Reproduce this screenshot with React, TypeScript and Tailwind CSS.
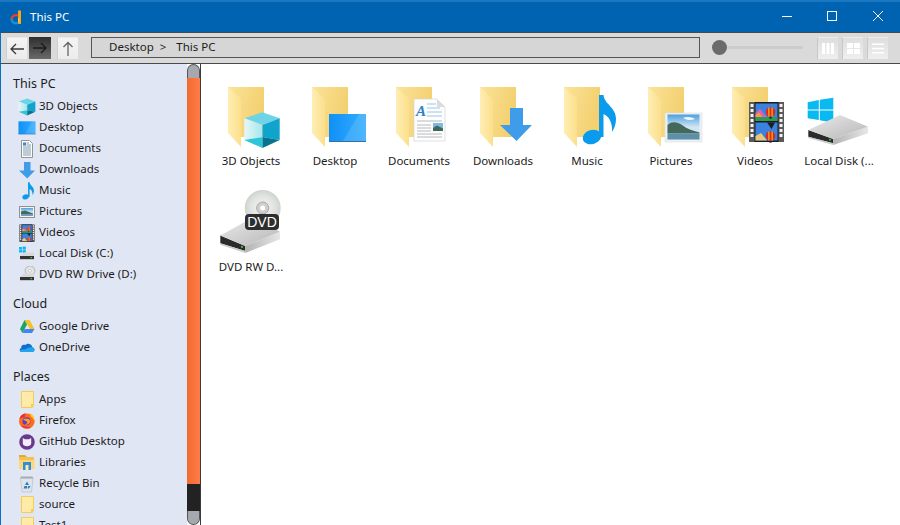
import React from "react";

const Folder = () => (
  <g>
    <path d="M9 3H45V53H22Z" fill="url(#fBack)" />
    <path d="M9 3L22 15V63L9 49Z" fill="url(#fFront)" />
  </g>
);

const Cube = () => (
  <g>
    <path d="M43.3 28.3L60.7 34.3L43.5 41L25.3 34.3Z" fill="#6dd3e6" />
    <path d="M25.3 34.3L43.5 41V53L25.3 56Z" fill="url(#cubeL)" />
    <path d="M25.3 56L43.5 53V64Z" fill="#2cc6d8" />
    <path d="M43.5 41L60.7 34.3V56L43.5 53Z" fill="#10a3cc" />
    <path d="M43.5 53L60.7 56L43.5 64Z" fill="#07738f" />
  </g>
);

const Monitor = () => (
  <g>
    <rect x="26" y="30" width="37" height="28" fill="url(#screen)" />
    <path d="M40 57L56 30H63V57Z" fill="#ffffff" fillOpacity="0.12" />
    <rect x="26" y="57" width="37" height="1" fill="#3a6f9c" />
  </g>
);

const Doc = () => (
  <g>
    <path d="M27 15H50L58 23V57H27Z" fill="#fdfdfd" stroke="#d4d4d4" strokeWidth="0.7" />
    <path d="M50 15V23H58Z" fill="#dcdcdc" />
    <text x="29" y="32" fontSize="15" fontStyle="italic" fontWeight="700" fill="#2f80c8" fontFamily="Liberation Serif, serif">A</text>
    <path d="M40 20H49M40 24H53M40 28H55M40 32H55" stroke="#9cc6e8" strokeWidth="1" />
    <path d="M30 37H55M30 47H44M30 50H55M30 53H55" stroke="#b5b9bd" strokeWidth="1" />
    <path d="M30 41H44M30 44H44" stroke="#b5b9bd" strokeWidth="1" />
    <rect x="46" y="39" width="10" height="8" fill="#7fb9df" />
    <path d="M46 44L50 41.5L56 44.5V47H46Z" fill="#3f6a5a" />
  </g>
);

const ArrowDown = () => <path d="M39 24H52V41H61L45.5 57L29 41H39Z" fill="#3f9ce9" />;

const Note = () => (
  <g fill="#0a9bec">
    <ellipse cx="37" cy="53" rx="9.5" ry="7" transform="rotate(-18 37 53)" />
    <path d="M44 11H48.5C49 20 61 23 61 35C61 40 59.5 44 57 48C57.5 42 56 33 48.5 30V53H44Z" />
  </g>
);

const Picture = () => (
  <g>
    <rect x="26" y="29" width="37" height="29" fill="#eef0f2" stroke="#dcdfe2" strokeWidth="0.6" />
    <rect x="28.5" y="30.5" width="32" height="25" fill="url(#sky)" />
    <path d="M44 34C48 32 53 33 56 35C52 37 47 36 44 34Z" fill="#eef6fa" />
    <path d="M28.5 41C33 37 38 38 43 41C48 45 55 47 60.5 48.5V49.5H28.5Z" fill="#44685a" />
    <rect x="28.5" y="49.5" width="32" height="6" fill="#5d8fa8" />
  </g>
);

const Balloon = ({ x, y }: { x: number; y: number }) => (
  <g>
    <circle cx={x} cy={y} r="4.8" fill="#d82a22" />
    <path d={`M${x - 1.6} ${y - 4.6}V${y + 4.6}M${x + 1.6} ${y - 4.6}V${y + 4.6}`} stroke="#f5c518" strokeWidth="1.1" />
    <rect x={x - 1.2} y={y + 5} width="2.4" height="1.6" fill="#222" />
  </g>
);

const Film = () => (
  <g>
    <rect x="26" y="18" width="35" height="40" fill="#5a5a5a" />
    <g fill="#f2f2f2">
      {[20, 25, 30, 35, 40, 45, 50].map((y) => (
        <React.Fragment key={y}>
          <rect x="27.5" y={y} width="3" height="3" />
          <rect x="56.5" y={y} width="3" height="3" />
        </React.Fragment>
      ))}
    </g>
    <rect x="31.5" y="18" width="24" height="40" fill="#1c1c1c" />
    <rect x="32.5" y="19.5" width="22" height="17.5" fill="#3a82e0" />
    <rect x="32.5" y="38.5" width="22" height="18" fill="#3a82e0" />
    <path d="M32.5 33V29L37 25L41 30L44 33Z" fill="#e060b0" />
    <path d="M32.5 33V31L36 28.5L39 33Z" fill="#f0a040" />
    <rect x="32.5" y="33" width="22" height="4" fill="#2f9a52" />
    <path d="M32.5 56.5V52L38 49L44 56.5Z" fill="#e8c878" />
    <Balloon x={47.5} y={28} />
    <path d="M44 38.5H52L48.5 45Z" fill="#1d1d1d" />
    <Balloon x={47.5} y={52} />
  </g>
);

const Drive = ({ transform }: { transform?: string }) => (
  <g transform={transform}>
    <path d="M1.3 46L26.3 55V59.3L1.3 52.7Z" fill="#2b2b2b" />
    <path d="M1.3 52.7L26.3 59.3V61L1.3 54Z" fill="#c9c9c9" />
    <path d="M1.3 46L33 31L61 42.7L26.3 55Z" fill="url(#driveTop)" />
    <path d="M26.3 55L61 42.7V49.3L26.3 61Z" fill="url(#driveSide)" />
    <circle cx="23" cy="55.8" r="1" fill="#34d04e" />
  </g>
);

const WinLogo = () => (
  <g fill="#08b9f2">
    <path d="M0.7 18.3L11.8 16V25.5H0.7Z" />
    <path d="M12.8 15.8L26.3 13.7V25.5H12.8Z" />
    <path d="M0.7 26.5H11.8V36L0.7 34.3Z" />
    <path d="M12.8 26.5H26.3V38.7L12.8 36.3Z" />
  </g>
);

const DvdTop = () => (
  <g>
    <circle cx="43.7" cy="18" r="18" fill="url(#disc)" />
    <circle cx="43.7" cy="18" r="6" fill="#cfcfcf" stroke="#a9a9a9" strokeWidth="1" />
    <circle cx="43.7" cy="18" r="2.5" fill="#fff" />
  </g>
);

const Icon = ({ children, viewBox = "0 0 64 64", size = 64 }: { children: React.ReactNode; viewBox?: string; size?: number }) => (
  <svg width={size} height={size} viewBox={viewBox} className="shrink-0">
    {children}
  </svg>
);

const Mini = ({ children }: { children: React.ReactNode }) => (
  <svg width="18" height="18" viewBox="0 0 18 18" className="shrink-0">
    {children}
  </svg>
);

const MiniNote = () => (
  <Mini>
    <path d="M3.5 0.5H15.5V13.5L13.5 16.5H3.5Z" fill="#ffeaa8" stroke="#f2cd5a" strokeWidth="1" />
    <path d="M13 13H15.5V16.5H13Z" fill="#f2cd5a" />
  </Mini>
);

const MiniDrive = () => (
  <g>
    <path d="M2 11L6 7.5H16V11Z" fill="#d8d8d8" />
    <rect x="2" y="11" width="14" height="3" fill="#333" />
    <rect x="2" y="14" width="14" height="0.8" fill="#bdbdbd" />
    <rect x="12.5" y="12" width="1.4" height="1.2" fill="#3fdc5a" />
  </g>
);

const sideIcons: Record<string, React.ReactNode> = {
  "3D Objects": <Icon size={18} viewBox="24 27 38 38"><Cube /></Icon>,
  Desktop: <Icon size={18} viewBox="25 25 39 39"><Monitor /></Icon>,
  Documents: (
    <Mini>
      <path d="M3.5 0.5H11.5L14.5 3.5V17.5H3.5Z" fill="#fdfdfd" stroke="#8f9499" strokeWidth="1" />
      <rect x="5" y="2.5" width="3" height="3" fill="#3d87c9" />
      <path d="M8.5 3H11M8.5 5H13M5 7H13M5 9H13M5 11H13M5 13H13M5 15H13" stroke="#6f8ea8" strokeWidth="0.9" />
    </Mini>
  ),
  Downloads: <Icon size={18} viewBox="27 22 36 36"><ArrowDown /></Icon>,
  Music: <Icon size={18} viewBox="15 10 52 52"><Note /></Icon>,
  Pictures: (
    <Mini>
      <rect x="1.5" y="3.5" width="15" height="11" fill="#f2f3f4" stroke="#8e9296" strokeWidth="1" />
      <rect x="3" y="5" width="12" height="8" fill="url(#sky)" />
      <path d="M3 8.5L7 7.5L15 10.5V11H3Z" fill="#44685a" />
      <rect x="3" y="11" width="12" height="2" fill="#6f9db4" />
    </Mini>
  ),
  Videos: <Icon size={18} viewBox="23 17 41 41"><Film /></Icon>,
  "Local Disk (C:)": (
    <Mini>
      <g fill="#08b9f2">
        <rect x="1" y="2" width="3" height="2.6" />
        <rect x="4.6" y="1.6" width="3.2" height="3" />
        <rect x="1" y="5.1" width="3" height="2.4" />
        <rect x="4.6" y="5.1" width="3.2" height="2.6" />
      </g>
      <MiniDrive />
    </Mini>
  ),
  "DVD RW Drive (D:)": (
    <Mini>
      <circle cx="12" cy="4.8" r="5" fill="url(#disc)" stroke="#a8a8a8" strokeWidth="0.6" />
      <circle cx="12" cy="4.8" r="1.5" fill="#fff" stroke="#999" strokeWidth="0.5" />
      <MiniDrive />
    </Mini>
  ),
  "Google Drive": (
    <Mini>
      <path d="M6.5 2H11.5L16.5 11H12Z" fill="#f6c026" />
      <path d="M6.5 2L9 6.5L4.5 15L2 11Z" fill="#1ea362" />
      <path d="M6.5 11H16.5L14 15H4.5Z" fill="#4286f5" />
    </Mini>
  ),
  OneDrive: (
    <Mini>
      <path d="M4 13H14C17 13 17.5 9 14.5 8.5C14 5 9.5 3.5 7.5 6C4 5 2.5 8 3.5 9C1 9.5 1 13 4 13Z" fill="#0f6fd0" />
      <path d="M4 13H14C17 13 17.5 9.5 14.5 8.5C11 7.5 9 9 7 10.5L3 10.5C1.5 11 2 13 4 13Z" fill="#22a4ee" />
    </Mini>
  ),
  Apps: <MiniNote />,
  Firefox: (
    <Mini>
      <circle cx="8.8" cy="9.3" r="7.8" fill="#ff6a1f" />
      <path d="M1.5 7C2 3.5 5 1.5 8 1.5C6.5 3 6.5 4.5 7 5C5 5 3.5 6 1.5 7Z" fill="#e8302e" />
      <path d="M12 1C15 2.5 17 6 16.5 9.5C15.5 7 14.5 5.5 12.5 4.5Z" fill="#ffc61e" />
      <circle cx="8.5" cy="9.2" r="4" fill="#5b3fc8" />
      <path d="M5 7.5C7 6 11 6 12.5 9C12 12 9 13.5 6.5 12.5C9 12 10 10 8.5 9.5Z" fill="#ff9a1f" />
      <path d="M3 13C5 16 10 17 13 15C9 15 5 14.5 3 13Z" fill="#d6245c" />
    </Mini>
  ),
  "GitHub Desktop": (
    <Mini>
      <circle cx="9" cy="9" r="6.6" fill="#6a3a8e" stroke="#6a3a8e" strokeWidth="2.4" />
      <path d="M4.8 5L7 6.2H11L13.2 5V10.5C13.2 12.5 11 13.2 9 13.2C7 13.2 4.8 12.5 4.8 10.5Z" fill="#f4edf8" />
    </Mini>
  ),
  Libraries: (
    <Mini>
      <path d="M1 1H7L9 3H1Z" fill="#e2a93a" />
      <rect x="1" y="3" width="15" height="3" fill="#f2c14e" />
      <rect x="1" y="6" width="15.5" height="9" fill="#ffd875" />
      <rect x="5" y="8" width="8" height="8" fill="#2f8fd8" />
      <rect x="7.5" y="11" width="3" height="5" fill="#ffe9a5" />
    </Mini>
  ),
  "Recycle Bin": (
    <Mini>
      <path d="M3 1.5H14.5L15.5 3.5H2Z" fill="#a9acb0" />
      <path d="M2.5 3.5H15L13.5 17H4Z" fill="#dfe4ea" stroke="#b4b8bd" strokeWidth="0.6" />
      <path d="M9 6.5L11 10H7Z M6.5 11H9V13.5H5.5Z M12.5 11L11 13.5H9.8V11Z" fill="#2b7fc4" />
    </Mini>
  ),
  source: <MiniNote />,
  Test1: <MiniNote />,
};

const groups = [
  { title: "This PC", items: ["3D Objects", "Desktop", "Documents", "Downloads", "Music", "Pictures", "Videos", "Local Disk (C:)", "DVD RW Drive (D:)"] },
  { title: "Cloud", items: ["Google Drive", "OneDrive"] },
  { title: "Places", items: ["Apps", "Firefox", "GitHub Desktop", "Libraries", "Recycle Bin", "source", "Test1"] },
];

const tiles: { label: string; icon: React.ReactNode }[] = [
  { label: "3D Objects", icon: <><Folder /><Cube /></> },
  { label: "Desktop", icon: <><Folder /><Monitor /></> },
  { label: "Documents", icon: <><Folder /><Doc /></> },
  { label: "Downloads", icon: <><Folder /><ArrowDown /></> },
  { label: "Music", icon: <><Folder /><Note /></> },
  { label: "Pictures", icon: <><Folder /><Picture /></> },
  { label: "Videos", icon: <><Folder /><Film /></> },
  { label: "Local Disk (...", icon: <><WinLogo /><Drive /></> },
  {
    label: "DVD RW D...",
    icon: (
      <>
        <DvdTop />
        <Drive transform="translate(0 -8.2) scale(1 1.167)" />
        <rect x="26" y="24" width="34" height="16" rx="4" fill="#2e2e2e" />
        <text x="43" y="37" textAnchor="middle" fontSize="14" fill="#fff" fontFamily="Liberation Sans, sans-serif">DVD</text>
      </>
    ),
  },
];

const NavButton = ({ dark, children }: { dark?: boolean; children: React.ReactNode }) => (
  <div className={`h-[22px] flex items-center justify-center ${dark ? "w-[22px] bg-gradient-to-b from-[#2f2f2f] to-[#6a6a6a]" : "w-[21px] bg-gradient-to-b from-[#f4f4f4] to-[#ececec] border-t border-l border-t-[#e8e8e8] border-l-[#cfcfcf]"}`}>
    {children}
  </div>
);

const ViewButton = ({ children }: { children: React.ReactNode }) => (
  <div className="w-[21px] h-[22px] flex items-center justify-center bg-gradient-to-b from-[#dedede] to-[#efefef] border-t border-l border-t-[#ececec] border-l-[#c8c8c8]">{children}</div>
);

export default function App() {
  return (
    <div className="w-[900px] h-[525px] overflow-hidden flex flex-col bg-white text-[11.5px] text-[#1c1c1c] font-['Noto_Sans',sans-serif]">
      <svg width="0" height="0" className="absolute">
        <defs>
          <linearGradient id="fBack" x1="0" x2="1" y1="0" y2="0.3">
            <stop offset="0" stopColor="#fbe39a" />
            <stop offset="1" stopColor="#f3d06f" />
          </linearGradient>
          <linearGradient id="fFront" x1="0" x2="1" y1="0" y2="0">
            <stop offset="0" stopColor="#ffeeb4" />
            <stop offset="1" stopColor="#fbdf8c" />
          </linearGradient>
          <linearGradient id="cubeL" x1="0" x2="1" y1="0" y2="0">
            <stop offset="0" stopColor="#e6f7f8" />
            <stop offset="1" stopColor="#a5e6ec" />
          </linearGradient>
          <linearGradient id="screen" x1="0" x2="1" y1="0" y2="0">
            <stop offset="0" stopColor="#1090f8" />
            <stop offset="1" stopColor="#35aefe" />
          </linearGradient>
          <linearGradient id="sky" x1="0" x2="0" y1="0" y2="1">
            <stop offset="0" stopColor="#4f9fe0" />
            <stop offset="0.5" stopColor="#cfe6f3" />
          </linearGradient>
          <linearGradient id="driveTop" x1="0" x2="1" y1="0" y2="1">
            <stop offset="0" stopColor="#ebebeb" />
            <stop offset="1" stopColor="#b6b6b6" />
          </linearGradient>
          <linearGradient id="driveSide" x1="0" x2="1" y1="0" y2="0">
            <stop offset="0" stopColor="#b4b4b4" />
            <stop offset="1" stopColor="#e6e6e6" />
          </linearGradient>
          <radialGradient id="disc">
            <stop offset="0" stopColor="#f5f5f5" />
            <stop offset="0.7" stopColor="#dfe3df" />
            <stop offset="1" stopColor="#cfd2cf" />
          </radialGradient>
        </defs>
      </svg>

      <header className="h-[32px] shrink-0 bg-[#0063b1] border-t-2 border-t-[#1a78c2] flex items-center text-white">
        <svg width="14" height="16" viewBox="0 0 14 16" className="ml-[10px] shrink-0">
          <path d="M8 1.5H11V15H8Z" fill="#f0a81c" />
          <path d="M8 6.5C5 5.5 1.5 7 1.5 10.5" stroke="#e8402a" strokeWidth="2.4" fill="none" />
          <path d="M1.5 10C1.5 13 4.5 15 8 13.8" stroke="#1a8fe0" strokeWidth="2.4" fill="none" />
          <path d="M8 9H9.5V13H8Z" fill="#f7d02c" />
        </svg>
        <span className="ml-[6px] pb-[1px]">This PC</span>
        <div className="ml-auto flex items-center">
          <svg width="45" height="14" viewBox="0 0 45 14"><path d="M18 6.5H28" stroke="#fff" strokeWidth="1" /></svg>
          <svg width="46" height="14" viewBox="0 0 46 14"><rect x="18.5" y="1.5" width="9" height="9" fill="none" stroke="#fff" strokeWidth="1" /></svg>
          <svg width="45" height="14" viewBox="0 0 45 14"><path d="M18 1L28 11M28 1L18 11" stroke="#fff" strokeWidth="1" /></svg>
        </div>
      </header>

      <div className="h-[32px] shrink-0 bg-[#dadada] border-y border-y-[#4a4a4a] border-l border-l-[#0a6fc0] flex items-center pl-[5px]">
        <div className="flex items-center gap-[2px]">
          <NavButton>
            <svg width="14" height="12" viewBox="0 0 14 12"><path d="M14 6H1M6 1L1 6L6 11" stroke="#3a3a3a" strokeWidth="1.3" fill="none" /></svg>
          </NavButton>
          <NavButton dark>
            <svg width="14" height="12" viewBox="0 0 14 12"><path d="M0 6H13M8 1L13 6L8 11" stroke="#1c1c1c" strokeWidth="1.3" fill="none" /></svg>
          </NavButton>
          <div className="w-[2px]" />
          <NavButton>
            <svg width="12" height="15" viewBox="0 0 12 15"><path d="M6 15V1.5M1.5 6L6 1.5L10.5 6" stroke="#666" strokeWidth="1.3" fill="none" /></svg>
          </NavButton>
        </div>
        <div className="ml-[13px] -mt-[1px] w-[609px] h-[21px] border border-[#555] bg-[#d6d6d6] flex items-center pl-[17px] pb-[1px]">
          <span>Desktop</span>
          <span className="ml-[6px]">&gt;</span>
          <span className="ml-[10px]">This PC</span>
        </div>
        <div className="ml-[12px] -mt-[1px] w-[91px] flex items-center">
          <div className="w-[15px] h-[15px] rounded-full bg-[#6b6b6b] shrink-0" />
          <div className="w-[76px] h-[3px] bg-[#cccccc] rounded-full" />
        </div>
        <div className="ml-[14px] flex items-center gap-[4px]">
          <ViewButton>
            <svg width="12" height="11" viewBox="0 0 12 11" fill="#fff"><rect width="3" height="11" /><rect x="4.5" width="3" height="11" /><rect x="9" width="3" height="11" /></svg>
          </ViewButton>
          <ViewButton>
            <svg width="13" height="11" viewBox="0 0 13 11" fill="#fff"><rect width="6" height="5" /><rect x="7" width="6" height="5" /><rect y="6" width="6" height="5" /><rect x="7" y="6" width="6" height="5" /></svg>
          </ViewButton>
          <ViewButton>
            <svg width="12" height="11" viewBox="0 0 12 11" fill="#fff"><rect y="0.5" width="12" height="1.5" /><rect y="4.75" width="12" height="1.5" /><rect y="9" width="12" height="1.5" /></svg>
          </ViewButton>
        </div>
      </div>

      <div className="flex-1 flex min-h-0">
        <nav className="w-[187px] shrink-0 bg-[#e1e6f4] border-l border-l-[#0a6fc0] overflow-hidden pt-[6px]">
          {groups.map((g) => (
            <section key={g.title} className="mb-[5px]">
              <h2 className="h-[26px] flex items-center pl-[12px] pt-[2px] text-[12.5px] font-normal">{g.title}</h2>
              {g.items.map((item) => (
                <div key={item} className="h-[21px] flex items-center pl-[17px] gap-[3px] whitespace-nowrap">
                  {sideIcons[item]}
                  <span className="pb-[1px]">{item}</span>
                </div>
              ))}
            </section>
          ))}
        </nav>

        <div className="w-[14px] shrink-0 flex flex-col border-r border-r-[#3a3a3a]">
          <div className="h-[14px] bg-[#a6a8b0] rounded-t-[7px] border border-[#555] border-b-0" />
          <div className="flex-1 bg-gradient-to-r from-[#f26a2e] to-[#ff7c48]" />
          <div className="h-[27px] bg-[#222222]" />
          <div className="h-[14px] bg-[#a6a8b0] rounded-b-[7px] border border-[#555] border-t-0" />
        </div>

        <main className="flex-1 pl-[8px] pt-[20px] grid grid-cols-[repeat(8,84px)] auto-rows-[106px]">
          {tiles.map((t) => (
            <div key={t.label} className="flex flex-col items-center">
              <Icon>{t.icon}</Icon>
              <span className="mt-[5px] leading-[16px] whitespace-nowrap">{t.label}</span>
            </div>
          ))}
        </main>
      </div>
    </div>
  );
}
